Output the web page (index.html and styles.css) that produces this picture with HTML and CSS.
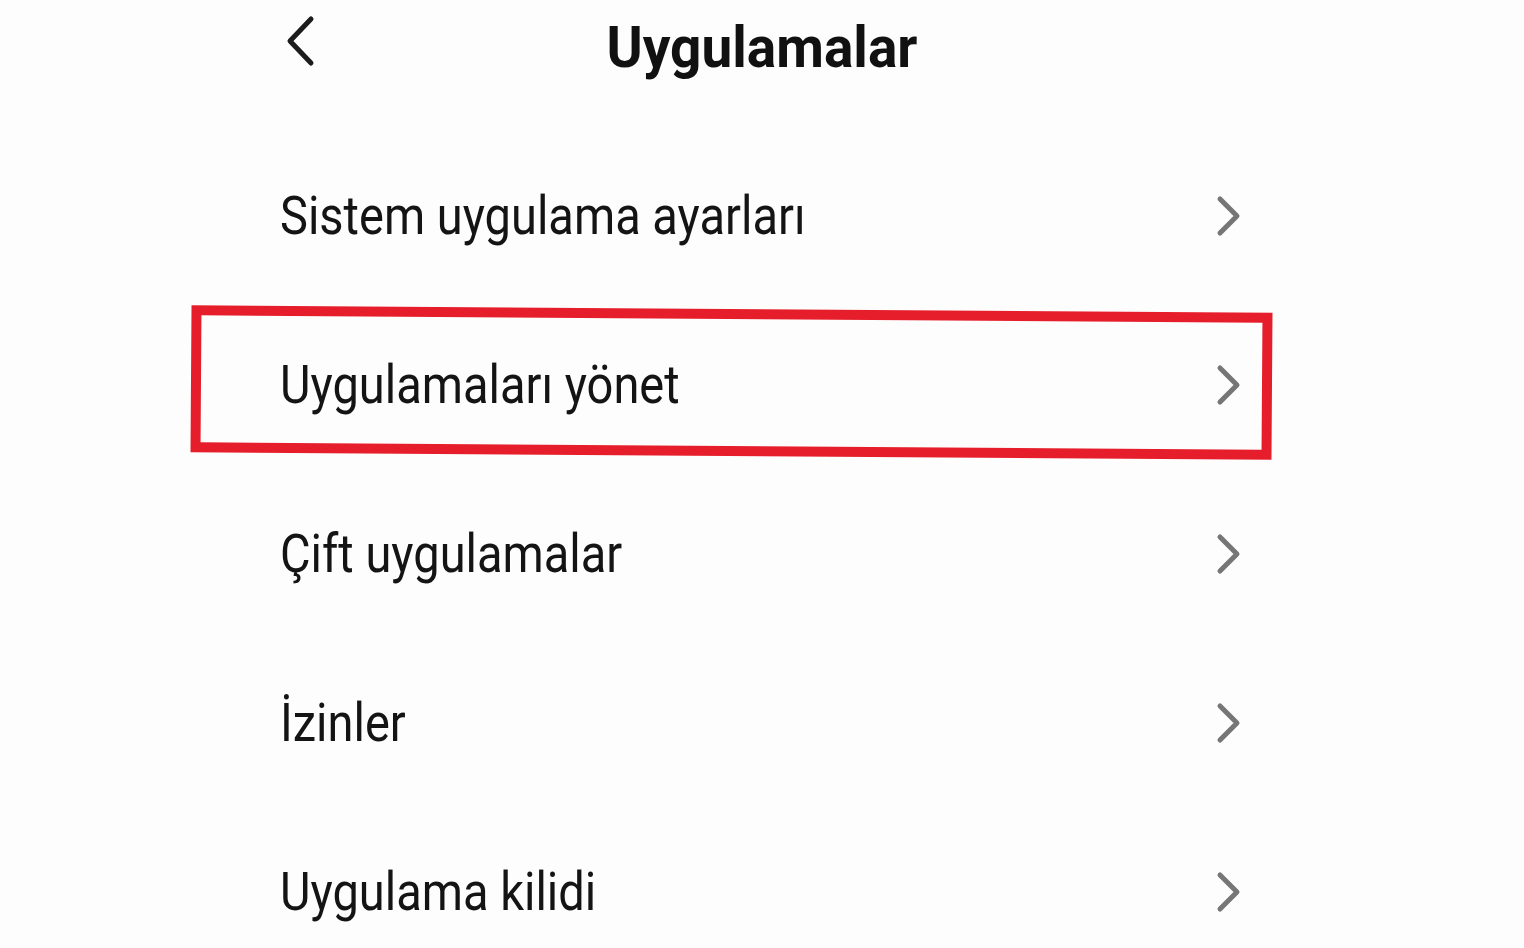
FILE: index.html
```html
<!DOCTYPE html>
<html lang="tr">
<head>
    <meta charset="UTF-8">
    <meta name="viewport" content="width=device-width, initial-scale=1.0">
    <title>Uygulamalar</title>
    <link rel="stylesheet" href="styles.css">
</head>
<body>
    <div class="screen">
        <div class="header">
            <a href="#" class="back-button">
                <svg width="32" height="54" viewBox="0 0 32 54">
                    <path d="M27 5 L6 27 L27 49" fill="none" stroke="#1c1c1c" stroke-width="5" stroke-linecap="round" stroke-linejoin="round"/>
                </svg>
            </a>
            <h1 class="title">Uygulamalar</h1>
        </div>

        <ul class="menu">
            <li class="menu-item">
                <span class="label">Sistem uygulama ayarları</span>
                <svg class="chevron" width="26" height="42" viewBox="0 0 26 42"><path d="M4 4 L21 21 L4 38" /></svg>
            </li>
            <li class="menu-item highlighted">
                <span class="label">Uygulamaları yönet</span>
                <svg class="chevron" width="26" height="42" viewBox="0 0 26 42"><path d="M4 4 L21 21 L4 38" /></svg>
                <div class="highlight-box"></div>
            </li>
            <li class="menu-item">
                <span class="label">Çift uygulamalar</span>
                <svg class="chevron" width="26" height="42" viewBox="0 0 26 42"><path d="M4 4 L21 21 L4 38" /></svg>
            </li>
            <li class="menu-item">
                <span class="label">İzinler</span>
                <svg class="chevron" width="26" height="42" viewBox="0 0 26 42"><path d="M4 4 L21 21 L4 38" /></svg>
            </li>
            <li class="menu-item">
                <span class="label">Uygulama kilidi</span>
                <svg class="chevron" width="26" height="42" viewBox="0 0 26 42"><path d="M4 4 L21 21 L4 38" /></svg>
            </li>
        </ul>
    </div>
</body>
</html>
```

FILE: styles.css
```css
body {
    font-family: Roboto, "Noto Sans", Arial, sans-serif;
    background-color: #fdfdfd;
    margin: 0;
    overflow: hidden;
}
.screen {
    width: 1524px;
    height: 948px;
    position: relative;
}
.header {
    position: relative;
    height: 131px;
}
.back-button {
    position: absolute;
    left: 284px;
    top: 14px;
    display: block;
}
.title {
    margin: 0;
    padding-top: 14px;
    text-align: center;
    font-size: 55px;
    font-weight: 700;
    color: #111;
    line-height: 64px;
    transform: scaleY(1.06);
}
.menu {
    list-style: none;
    margin: 0;
    padding: 0;
}
.menu-item {
    position: relative;
    height: 169px;
    display: flex;
    align-items: center;
    justify-content: space-between;
    padding: 0 282px 0 280px;
}
.label {
    font-size: 47px;
    color: #141414;
    transform: scaleY(1.13);
    transform-origin: left center;
}
.chevron path {
    fill: none;
    stroke: #767676;
    stroke-width: 5;
    stroke-linecap: round;
    stroke-linejoin: round;
}
.highlight-box {
    position: absolute;
    left: 191px;
    top: 9px;
    width: 1081px;
    height: 147px;
    border: 10px solid #e61e2b;
    box-sizing: border-box;
    transform: rotate(0.4deg);
}
```
